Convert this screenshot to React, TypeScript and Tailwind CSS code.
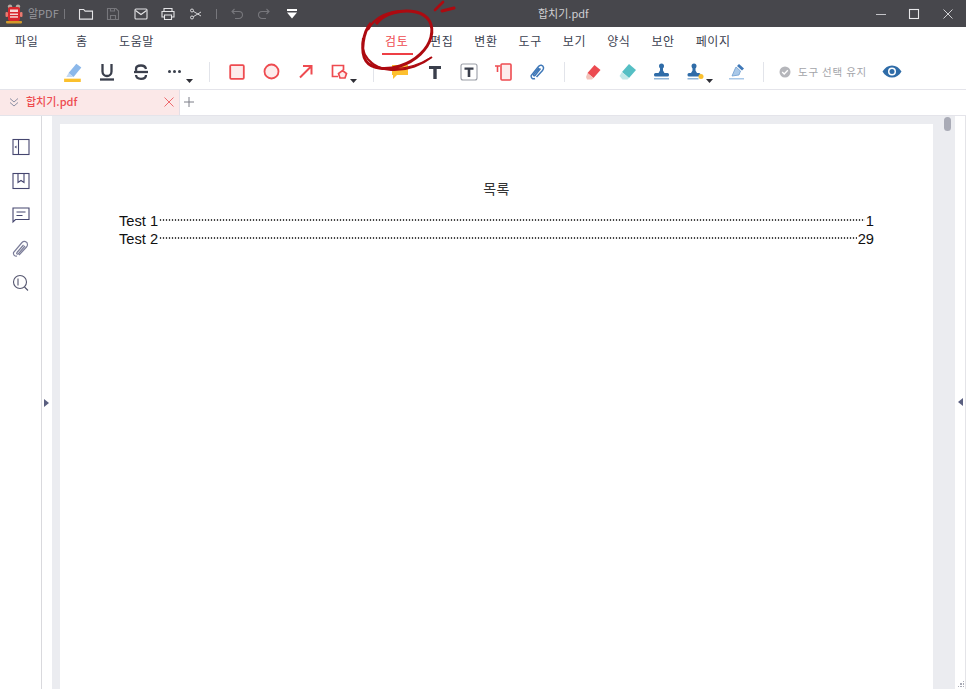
import React from 'react';

const KR = '[font-family:"Noto_Sans_CJK_KR","Noto_Sans",sans-serif]';

const MENU_LEFT = [
  { label: '파일', w: 'w-[61px]' },
  { label: '홈', w: 'w-[43px]' },
  { label: '도움말', w: 'w-[40px]' },
];
const MENU_RIGHT = ['편집', '변환', '도구', '보기', '양식', '보안', '페이지'];

function Caret({ className = '' }: { className?: string }) {
  return (
    <svg width="7" height="4" viewBox="0 0 7 4" className={className}>
      <path d="M0 0h7L3.5 4z" fill="#2f2f36" />
    </svg>
  );
}

function Sep({ className = '' }: { className?: string }) {
  return <div className={`w-px h-[20px] bg-[#e2e4ea] shrink-0 ${className}`} />;
}

function Tool({ children, caret }: { children: React.ReactNode; caret?: boolean }) {
  return (
    <div className="relative w-[34px] h-[34px] shrink-0 flex items-center justify-center">
      {children}
      {caret && <Caret className="absolute right-[-1px] bottom-[6px]" />}
    </div>
  );
}

function Logo() {
  return (
    <svg width="18" height="20" viewBox="0 0 18 20">
      <circle cx="5" cy="2.6" r="2.2" fill="#b5aaa0" />
      <circle cx="13" cy="2.6" r="2.2" fill="#b5aaa0" />
      <rect x="3" y="3" width="12" height="14" rx="2" fill="#d8262c" />
      <rect x="5" y="5.5" width="8" height="2.5" fill="#f6d7d4" />
      <rect x="5" y="9.5" width="8" height="1.5" fill="#f6d7d4" />
      <rect x="5" y="12.2" width="8" height="1.5" fill="#f6d7d4" />
      <rect x="0.5" y="8" width="2.5" height="5" rx="1" fill="#e9796f" />
      <rect x="15" y="8" width="2.5" height="5" rx="1" fill="#e9796f" />
      <rect x="1" y="17" width="16" height="2.4" rx="0.8" fill="#d39a2b" />
    </svg>
  );
}

function TitleIcon({ children, w = 16, className = '' }: { children: React.ReactNode; w?: number; className?: string }) {
  return (
    <svg width={w} height="16" viewBox="0 0 16 16" fill="none" stroke="currentColor" strokeWidth="1.1" className={`shrink-0 ${className}`}>
      {children}
    </svg>
  );
}

function TitleBar() {
  return (
    <div className="h-[27px] bg-[#47474c] flex items-center shrink-0 text-[#e4e4e6]">
      <div className="ml-[5px]"><Logo /></div>
      <span className={`ml-[5px] w-[32px] text-[11px] text-[#98989d] whitespace-nowrap ${KR}`}>알PDF</span>
      <div className="ml-[4px] w-px h-[10px] bg-[#77777c]" />
      <TitleIcon className="ml-[13px]"><path d="M1.5 3.5h4.2l1.4 1.6h7.4v8h-13z" /></TitleIcon>
      <TitleIcon className="ml-[11px] text-[#77777c]"><path d="M2.5 2.5h8.5l2.5 2.5v8.500h-11z M5.500 13.500v-4h5v4 M5.500 2.500v2.500h4v-2.500" /></TitleIcon>
      <TitleIcon className="ml-[12px]"><rect x="2" y="3" width="12" height="10" rx="1" /><path d="M2.500 4.500l5.500 4 5.500-4" /></TitleIcon>
      <TitleIcon className="ml-[11px]"><path d="M4 5V2.500h8V5 M4 11H2V5.500h12V11h-2 M4.500 9h7v4.500h-7z" /></TitleIcon>
      <TitleIcon className="ml-[12px]">
        <g strokeWidth="0.900">
          <circle cx="4" cy="4.500" r="1.500" /><circle cx="4" cy="11.500" r="1.500" /><path d="M5.300 5.300l7.700 4.700 M5.300 10.700l7.700-4.700" />
        </g>
      </TitleIcon>
      <div className="ml-[12px] w-px h-[10px] bg-[#77777c]" />
      <TitleIcon className="ml-[12px] text-[#77777c]"><path d="M3 5.500h7a3.500 3.500 0 0 1 0 7H6 M5.500 3L3 5.500 5.500 8" /></TitleIcon>
      <TitleIcon className="ml-[11px] text-[#77777c]"><path d="M13 5.500H6a3.500 3.500 0 0 0 0 7h4 M10.500 3L13 5.500 10.500 8" /></TitleIcon>
      <svg width="12" height="12" viewBox="0 0 12 12" className="ml-[14px] shrink-0">
        <rect x="1" y="1" width="10" height="2" fill="#fff" />
        <path d="M1 4.500h10L6 10.500z" fill="#fff" />
      </svg>
      <span className={`ml-[240px] w-[50px] text-[11px] text-[#d0d0d3] whitespace-nowrap ${KR}`}>합치기.pdf</span>
      <svg width="12" height="12" viewBox="0 0 12 12" className="ml-[287px] shrink-0" stroke="#c4c4c8" fill="none"><path d="M1 6.500h10" /></svg>
      <svg width="12" height="12" viewBox="0 0 12 12" className="ml-[21px] shrink-0" stroke="#e8e8ea" fill="none" strokeWidth="1.100"><rect x="1.500" y="1.500" width="9" height="9" /></svg>
      <svg width="12" height="12" viewBox="0 0 12 12" className="ml-[22px] shrink-0" stroke="#d0d0d3" fill="none"><path d="M1.500 1.500l9 9 M10.500 1.500l-9 9" /></svg>
    </div>
  );
}

function MenuRow() {
  return (
    <div className={`h-[27px] bg-white flex items-center shrink-0 text-[12px] text-[#3b4150] ${KR}`}>
      <div className="ml-[15px] flex">
        {MENU_LEFT.map(m => (
          <span key={m.label} className={`${m.w} tracking-[0.6px]`}>{m.label}</span>
        ))}
      </div>
      <div className="relative ml-[226px] w-[23px] tracking-[0.6px] text-[#ee4b50] whitespace-nowrap">
        검토
        <div className="absolute left-[-3px] right-[-5px] bottom-[-5px] h-[2px] bg-[#ee3f45]" />
      </div>
      <div className="ml-[22px] flex gap-[21px] tracking-[0.6px]">
        {MENU_RIGHT.map(m => <span key={m} className="whitespace-nowrap">{m}</span>)}
      </div>
    </div>
  );
}

function Toolbar() {
  return (
    <div className={`h-[35px] bg-white flex items-center pl-[56px] shrink-0 ${KR}`}>
      <Tool>
        <svg width="20" height="20" viewBox="0 0 18 18">
          <path d="M5 10l7-8.500 4.500 3.500-7 8.500z" fill="#8cb8ea" />
          <path d="M3 13.500l2-3.500 4.500 3.500z" fill="#c3d9f2" />
          <rect x="1" y="15" width="15" height="3" fill="#fbc02d" />
        </svg>
      </Tool>
      <Tool>
        <svg width="16" height="18" viewBox="0 0 16 18" fill="none" stroke="#3a3f4c" strokeWidth="2.300">
          <path d="M3.500 1v7.500a4.500 4.500 0 0 0 9 0V1" />
          <path d="M1 16.500h14" />
        </svg>
      </Tool>
      <Tool>
        <svg width="16" height="18" viewBox="0 0 16 18" fill="none" stroke="#3a3f4c" strokeWidth="2.300">
          <path d="M13 6C12.500 3.500 10.500 2.500 8 2.500 5.500 2.500 3 3.500 3 6c0 .8.200 1.500.600 2" />
          <path d="M1 9h14" />
          <path d="M3 12c.2 2.500 2.500 3.800 5 3.800 2.700 0 5-1.300 5-3.800" />
        </svg>
      </Tool>
      <Tool caret>
        <div className="flex gap-[2px] -ml-[2px]">
          <span className="w-[3px] h-[3px] rounded-full bg-[#3a3f4c]" />
          <span className="w-[3px] h-[3px] rounded-full bg-[#3a3f4c]" />
          <span className="w-[3px] h-[3px] rounded-full bg-[#3a3f4c]" />
        </div>
      </Tool>
      <Sep className="ml-[17px]" />
      <div className="ml-[10px] flex">
        <Tool>
          <svg width="16" height="16" viewBox="0 0 16 16"><rect x="1.200" y="1.200" width="13.600" height="13.600" rx="1" fill="#fdecec" stroke="#ee4b50" strokeWidth="1.800" /></svg>
        </Tool>
        <Tool>
          <svg width="17" height="17" viewBox="0 0 17 17"><circle cx="8.500" cy="8.500" r="7" fill="#fdecec" stroke="#ee4b50" strokeWidth="1.800" /></svg>
        </Tool>
        <Tool>
          <svg width="15" height="15" viewBox="0 0 15 15" fill="none" stroke="#ee4b50" strokeWidth="2"><path d="M2 13.500L13 2.500 M5 2h8.500v8.500" /></svg>
        </Tool>
        <Tool caret>
          <svg width="17" height="17" viewBox="0 0 17 17" fill="none" stroke="#ee4b50" strokeWidth="1.700">
            <path d="M7 13.500H1.500v-11h11V7" />
            <path d="M11.500 7.500l4 3-1.500 4.500H9l-1.500-4.500z" fill="#fdecec" />
          </svg>
        </Tool>
      </div>
      <Sep className="ml-[17px]" />
      <div className="ml-[9px] flex">
        <Tool>
          <svg width="18" height="16" viewBox="0 0 18 16"><path d="M1 1h16v10H6l-4 4v-4H1z" fill="#fdc02f" /></svg>
        </Tool>
        <Tool>
          <svg width="14" height="14" viewBox="0 0 14 14" className="ml-[2px]"><path d="M1 1h12v3h-4.300v10H5.300V4H1z" fill="#3a3f4c" /></svg>
        </Tool>
        <Tool>
          <svg width="18" height="18" viewBox="0 0 18 18" className="ml-[2px]">
            <rect x="1" y="1" width="16" height="16" rx="2" fill="#fff" stroke="#9a9da6" strokeWidth="1.100" />
            <path d="M4.500 4.500h9v2.300h-3.200V14H7.700V6.800H4.500z" fill="#3a3f4c" />
          </svg>
        </Tool>
        <Tool>
          <svg width="18" height="18" viewBox="0 0 18 18" fill="none" stroke="#ee4b50" strokeWidth="1.600" className="ml-[2px]">
            <rect x="7" y="1" width="10" height="16" rx="1" fill="#fdecec" />
            <path d="M1 3h5 M3.500 3v6" />
          </svg>
        </Tool>
        <Tool>
          <svg width="18" height="18" viewBox="0 0 18 18" fill="none" stroke="#3f78b8" strokeWidth="1.500" className="ml-[4px]">
            <path d="M6 15.500c-2 1-4.500-.5-3.800-3L9.500 3.500c1.500-2 4.500-1.500 5 1 .2 1-.2 2-1 3L7.500 14" />
            <path d="M11.500 5.500L6 12.500c-1 1-2-.3-1.200-1.200L10 5" />
          </svg>
        </Tool>
      </div>
      <Sep className="ml-[11px]" />
      <div className="ml-[11px] flex">
        <Tool>
          <svg width="18" height="18" viewBox="0 0 18 18">
            <path d="M10.500 2l6 5-7 8-6-5z" fill="#ec4a50" />
            <path d="M3.500 10l6 5-1.500 1.500H3L2 14z" fill="#f3c4bb" />
          </svg>
        </Tool>
        <Tool>
          <svg width="19" height="18" viewBox="0 0 19 18">
            <path d="M11 1l7 6-7 8-7-6z" fill="#55bfc4" />
            <path d="M4 9l7 6-1.500 1.500H4.500L1.500 13z" fill="#c2e8e8" />
          </svg>
        </Tool>
        <Tool>
          <svg width="17" height="17" viewBox="0 0 17 17">
            <circle cx="8.500" cy="3" r="2.500" fill="#2f6ca8" />
            <path d="M7 4h3v3.500l1.500 2.500h-6L7 7.500z" fill="#2f6ca8" />
            <rect x="1" y="10" width="15" height="3.500" rx="1.500" fill="#2f6ca8" />
            <rect x="1" y="15" width="15" height="1.500" fill="#8fb5d8" />
          </svg>
        </Tool>
        <Tool caret>
          <svg width="17" height="17" viewBox="0 0 17 17">
            <circle cx="7" cy="3" r="2.500" fill="#2f6ca8" />
            <path d="M5.500 4h3v3.500L10 10H4l1.500-2.500z" fill="#2f6ca8" />
            <rect x="0.500" y="10" width="13" height="3.500" rx="1.500" fill="#2f6ca8" />
            <rect x="0.500" y="15" width="11" height="1.500" fill="#8fb5d8" />
            <circle cx="14" cy="13.500" r="2.500" fill="#fbc02d" />
          </svg>
        </Tool>
      </div>
      <div className="ml-[7px]">
        <Tool>
          <svg width="17" height="17" viewBox="0 0 17 17">
            <path d="M11 1l5 4.500-2 2-5-4.500z" fill="#3f78b8" />
            <path d="M8 4l4.500 4-1.500 4-7 1 3-7z" fill="#a9c8e8" stroke="#6d9dcf" strokeWidth="0.800" />
            <rect x="1" y="15" width="15" height="1.500" fill="#a9c8e8" />
          </svg>
        </Tool>
      </div>
      <Sep className="ml-[10px]" />
      <svg width="12" height="12" viewBox="0 0 12 12" className="ml-[15px] shrink-0">
        <circle cx="6" cy="6" r="5.500" fill="#b5b6bb" />
        <path d="M3.200 6l2 2 3.600-3.800" fill="none" stroke="#fff" strokeWidth="1.300" />
      </svg>
      <span className="ml-[7px] w-[68px] text-[10.500px] text-[#a3a4a9] tracking-[0.8px] whitespace-nowrap">도구 선택 유지</span>
      <svg width="20" height="13" viewBox="0 0 20 13" className="ml-[16px] shrink-0">
        <path d="M0.500 6.500C3 2.500 6 .5 10 .5s7 2 9.500 6c-2.500 4-5.500 6-9.500 6s-7-2-9.500-6z" fill="#2f6ca8" />
        <circle cx="10" cy="6.500" r="4" fill="#fff" />
        <circle cx="10" cy="6.500" r="2.500" fill="#2f6ca8" />
      </svg>
    </div>
  );
}

function TabRow() {
  return (
    <div className={`h-[27px] flex shrink-0 bg-white border-y border-[#e4e4ea] ${KR}`}>
      <div className="w-[180px] pb-[2px] bg-[#fbe8e8] border-r border-[#e4dfe6] flex items-center">
        <svg width="12" height="12" viewBox="0 0 12 12" fill="none" stroke="#8b8fa3" className="ml-[8px] shrink-0">
          <path d="M2 2.500l4 3.500 4-3.500 M2 6.500l4 3.500 4-3.500" />
        </svg>
        <span className="ml-[6px] text-[11px] font-medium text-[#ee4b50] whitespace-nowrap">합치기.pdf</span>
        <svg width="10" height="10" viewBox="0 0 10 10" stroke="#ee6a6e" fill="none" className="ml-auto mr-[5px] shrink-0">
          <path d="M.5.5l9 9 M9.500.5l-9 9" />
        </svg>
      </div>
      <div className="ml-[4px] pb-[2px] flex items-center">
        <svg width="10" height="10" viewBox="0 0 10 10" stroke="#7d7f88" fill="none">
          <path d="M5 0v10 M0 5h10" />
        </svg>
      </div>
    </div>
  );
}

function SideIcon({ children }: { children: React.ReactNode }) {
  return (
    <div className="w-[34px] h-[34px] flex items-center justify-center">
      <svg width="18" height="18" viewBox="0 0 18 18" fill="none" stroke="#45466f" strokeWidth="1.100">
        {children}
      </svg>
    </div>
  );
}

function Sidebar() {
  return (
    <div className="relative w-[42px] shrink-0 border-r border-[#d9d9dd] flex flex-col items-center pt-[14px]">
      <SideIcon>
        <rect x="1" y="1.500" width="16" height="15" />
        <path d="M6.500 1.500v15" />
        <path d="M4.500 7.500v3l-2-1.500z" fill="#45466f" stroke="none" />
      </SideIcon>
      <SideIcon>
        <rect x="1" y="1.500" width="16" height="15" />
        <path d="M6 1.500v9l3-2 3 2v-9" />
      </SideIcon>
      <SideIcon>
        <path d="M1 2h16v11.500H3.500L1 16z" />
        <path d="M4.500 6h9 M4.500 9.500h6" />
      </SideIcon>
      <SideIcon>
        <g stroke="#7b7d99" strokeWidth="1.200">
          <path d="M5 16c-2 .5-4-1-3.500-3.500L10 2.500c2-2 5.500-1 5.500 2 0 1-.5 2-1 2.500L7 15" />
          <path d="M11.500 5L5 12.500c-1 1 .3 2.300 1.300 1.300L13 6" />
        </g>
      </SideIcon>
      <SideIcon>
        <g stroke="#55566f">
          <circle cx="8" cy="8" r="6.500" />
          <path d="M6 4.500v7 M12.500 13l3.500 3.500" />
        </g>
      </SideIcon>
    </div>
  );
}

function TocLine({ label, page }: { label: string; page: string }) {
  return (
    <div className="flex items-baseline h-[18px] text-[14.700px] text-[#111] leading-[18px]">
      <span className="whitespace-nowrap">{label}</span>
      <div className="flex-1 mx-[1px] h-[2px] self-center -mt-[2px] bg-[radial-gradient(circle,#444_40%,transparent_65%)] bg-[length:3px_2px]" />
      <span>{page}</span>
    </div>
  );
}

function Doc() {
  return (
    <div className="flex-1 flex min-w-0 relative">
      <div className="w-[10px] bg-white shrink-0" />
      <div className="flex-1 bg-[#ebecf0] pl-[8px] pt-[8px] flex min-w-0 relative">
        <div className="w-[873px] bg-white shrink-0 pt-[54px] px-[59px] [font-family:'Liberation_Sans',Arial,sans-serif]">
          <div className={`text-center text-[14px] text-[#333] h-[26px] tracking-[0.3px] ${KR}`}>목록</div>
          <div className="mt-[8px]">
            <TocLine label="Test 1" page="1" />
            <TocLine label="Test 2" page="29" />
          </div>
        </div>
        <div className="absolute left-[892px] top-[1px] w-[7px] h-[14px] rounded-full bg-[#a9abb6]" />
      </div>
      <div className="w-[11px] bg-white shrink-0 border-r border-[#e4e4e8]" />
    </div>
  );
}

function RedCircle() {
  return (
    <svg width="110" height="80" viewBox="0 0 110 80" fill="none" stroke="#ad0a10" className="absolute left-[350px] top-0 pointer-events-none">
      <path d="M26 24C34 13 52 9 66 12c13 3 18 13 15 25-3 12-15 24-31 29-13 4-28 4-34-5C10 52 13 32 21 23" strokeWidth="3" />
      <path d="M18 30C24 17 40 10 56 11" strokeWidth="2" />
      <path d="M13 38c-3 16 7 30 28 32 17 1 32-6 41-13" strokeWidth="2" />
      <path d="M17 62c14 10 42 9 63-4" strokeWidth="1.300" />
      <path d="M85 10l8-8" strokeWidth="2.600" strokeLinecap="round" />
      <path d="M92 11l12-3" strokeWidth="3" strokeLinecap="round" />
    </svg>
  );
}

export default function App() {
  return (
    <div className="relative w-[966px] h-[689px] overflow-hidden flex flex-col bg-white">
      <TitleBar />
      <MenuRow />
      <Toolbar />
      <TabRow />
      <div className="flex-1 flex min-h-0">
        <Sidebar />
        <Doc />
      </div>
      <div className="absolute left-[44px] top-[399px] w-0 h-0 border-y-[4px] border-y-transparent border-l-[5px] border-l-[#5a5f80]" />
      <div className="absolute left-[958px] top-[398px] w-0 h-0 border-y-[4px] border-y-transparent border-r-[5px] border-r-[#5a5f80]" />
      <div className="absolute right-[2px] bottom-[2px] grid grid-cols-3 gap-[1px]">
        {[0, 1, 2, 3, 4, 5, 6, 7, 8].map(i => (
          <span key={i} className={`w-[1.500px] h-[1.500px] ${i === 0 || i === 1 || i === 3 ? 'bg-transparent' : 'bg-[#a9abb6]'}`} />
        ))}
      </div>
      <RedCircle />
    </div>
  );
}
